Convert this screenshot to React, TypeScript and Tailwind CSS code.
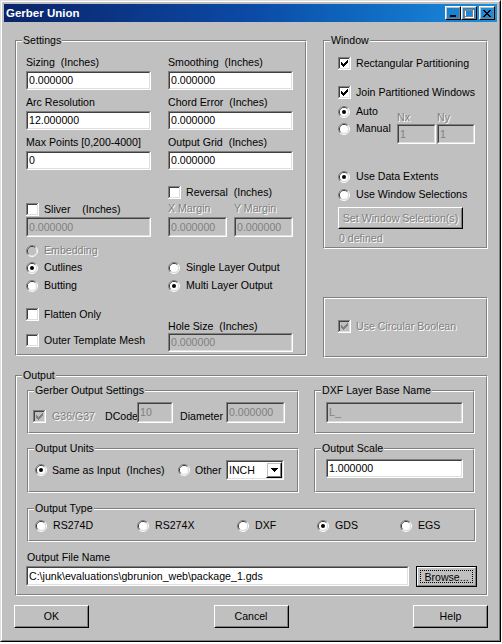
import React from "react";

const dis = "text-[#808080] [text-shadow:1px_1px_0_#fff]";
const sunkenOuter = "border border-t-[#808080] border-l-[#808080] border-b-white border-r-white";
const sunkenInner = "border border-t-[#404040] border-l-[#404040] border-b-[#dfdfdf] border-r-[#dfdfdf]";
const raisedOuter = "border border-t-white border-l-white border-b-black border-r-black";
const raisedInner = "border border-t-[#c0c0c0] border-l-[#c0c0c0] border-b-[#808080] border-r-[#808080]";

function Etched({ className = "", label, children }: { className?: string; label?: string; children?: React.ReactNode }) {
  return (
    <div className={`relative shrink-0 border border-t-[#808080] border-l-[#808080] border-b-white border-r-white ${className}`}>
      <div className="h-full border border-t-white border-l-white border-b-[#808080] border-r-[#808080]">{children}</div>
      {label && (
        <span className="absolute left-[6px] top-[-7px] bg-[#c0c0c0] px-[1px] leading-[13px] whitespace-pre">{label}</span>
      )}
    </div>
  );
}

function Field({ className = "", value, disabled }: { className?: string; value: string; disabled?: boolean }) {
  return (
    <div className={`shrink-0 ${sunkenOuter} ${className}`}>
      <div className={`h-full w-full flex items-center overflow-hidden pl-[1px] ${sunkenInner} ${disabled ? "bg-[#c0c0c0] text-[#808080]" : "bg-white text-black"}`}>
        <span className="leading-[13px] whitespace-pre">{value}</span>
      </div>
    </div>
  );
}

function Button({ className = "", children, disabled }: { className?: string; children: React.ReactNode; disabled?: boolean }) {
  return (
    <div className={`shrink-0 ${raisedOuter} ${className}`}>
      <div className={`h-full w-full flex items-center justify-center ${raisedInner}`}>
        <span className={`leading-[13px] whitespace-pre ${disabled ? dis : ""}`}>{children}</span>
      </div>
    </div>
  );
}

function CheckBox({ checked, disabled }: { checked?: boolean; disabled?: boolean }) {
  const bg = disabled ? "#c0c0c0" : "#ffffff";
  const m = disabled ? "#808080" : "#000000";
  return (
    <svg width="13" height="13" viewBox="0 0 13 13" shapeRendering="crispEdges" className="shrink-0">
      <rect x="0" y="0" width="13" height="13" fill="#ffffff" />
      <rect x="0" y="0" width="12" height="12" fill="#808080" />
      <rect x="1" y="1" width="11" height="11" fill="#dfdfdf" />
      <rect x="1" y="1" width="10" height="10" fill="#404040" />
      <rect x="2" y="2" width="9" height="9" fill={bg} />
      {checked && (
        <g fill={m}>
          <rect x="9" y="3" width="1" height="1" />
          <rect x="8" y="4" width="2" height="1" />
          <rect x="3" y="5" width="1" height="1" />
          <rect x="7" y="5" width="3" height="1" />
          <rect x="3" y="6" width="2" height="1" />
          <rect x="6" y="6" width="3" height="1" />
          <rect x="3" y="7" width="5" height="1" />
          <rect x="4" y="8" width="3" height="1" />
          <rect x="5" y="9" width="1" height="1" />
        </g>
      )}
    </svg>
  );
}

function RadioDot({ checked, disabled }: { checked?: boolean; disabled?: boolean }) {
  const bg = disabled ? "#c0c0c0" : "#ffffff";
  const m = disabled ? "#808080" : "#000000";
  return (
    <svg width="12" height="12" viewBox="0 0 12 12" className="shrink-0">
      <path d="M2.11 9.89 A5.5 5.5 0 0 1 9.89 2.11" stroke="#808080" strokeWidth="1" fill="none" />
      <path d="M9.89 2.11 A5.5 5.5 0 0 1 2.11 9.89" stroke="#ffffff" strokeWidth="1" fill="none" />
      <path d="M2.82 9.18 A4.5 4.5 0 0 1 9.18 2.82" stroke="#404040" strokeWidth="1" fill="none" />
      <path d="M9.18 2.82 A4.5 4.5 0 0 1 2.82 9.18" stroke="#dfdfdf" strokeWidth="1" fill="none" />
      <circle cx="6" cy="6" r="4" fill={bg} />
      {checked && <circle cx="6" cy="6" r="2" fill={m} />}
    </svg>
  );
}

function Check({ label, checked, disabled, className = "" }: { label: string; checked?: boolean; disabled?: boolean; className?: string }) {
  return (
    <div className={`flex items-center h-[13px] shrink-0 ${className}`}>
      <CheckBox checked={checked} disabled={disabled} />
      <span className={`ml-[5px] leading-[13px] whitespace-pre ${disabled ? dis : ""}`}>{label}</span>
    </div>
  );
}

function Radio({ label, checked, disabled, className = "" }: { label: string; checked?: boolean; disabled?: boolean; className?: string }) {
  return (
    <div className={`flex items-center h-[13px] shrink-0 ${className}`}>
      <RadioDot checked={checked} disabled={disabled} />
      <span className={`ml-[6px] leading-[13px] whitespace-pre ${disabled ? dis : ""}`}>{label}</span>
    </div>
  );
}

function Label({ children, disabled, className = "" }: { children: React.ReactNode; disabled?: boolean; className?: string }) {
  return <div className={`h-[13px] leading-[13px] whitespace-pre shrink-0 ${disabled ? dis : ""} ${className}`}>{children}</div>;
}

function TitleButton({ children, className = "" }: { children: React.ReactNode; className?: string }) {
  return (
    <div className={`w-[16px] h-[14px] ${raisedOuter} ${className}`}>
      <div className={`h-full w-full flex items-center justify-center ${raisedInner}`}>{children}</div>
    </div>
  );
}

export default function App() {
  return (
    <div className="w-[502px] h-[644px] bg-white overflow-hidden font-['Liberation_Sans',Arial,sans-serif] text-[10.6px] text-black">
      <div className="w-[501px] h-[642px] bg-[#c0c0c0] border border-t-[#dfdfdf] border-l-[#dfdfdf] border-b-black border-r-black">
        <div className="h-full border border-t-white border-l-white border-b-[#808080] border-r-[#808080] p-[2px] flex flex-col">
          {/* Title bar */}
          <div className="h-[18px] shrink-0 flex items-center bg-linear-to-r from-[#0a246a] via-[#0b4aa6] to-[#1c8ede] pr-[2px]">
            <span className="ml-[2px] font-bold text-white text-[11.5px] leading-[14px]">Gerber Union</span>
            <div className="ml-auto flex items-center">
              <TitleButton>
                <svg width="8" height="7" viewBox="0 0 8 7" shapeRendering="crispEdges">
                  <rect x="1" y="5" width="6" height="2" fill="#000" />
                </svg>
              </TitleButton>
              <TitleButton>
                <svg width="10" height="9" viewBox="0 0 10 9" shapeRendering="crispEdges">
                  <rect x="1.5" y="1.5" width="8" height="7" fill="none" stroke="#fff" />
                  <rect x="0.5" y="0.5" width="8" height="7" fill="none" stroke="#808080" />
                  <rect x="1" y="1" width="7" height="1" fill="#808080" />
                </svg>
              </TitleButton>
              <TitleButton className="ml-[2px]">
                <svg width="8" height="7" viewBox="0 0 8 7" shapeRendering="crispEdges">
                  <g fill="#000">
                    <rect x="0" y="0" width="2" height="1" />
                    <rect x="6" y="0" width="2" height="1" />
                    <rect x="1" y="1" width="2" height="1" />
                    <rect x="5" y="1" width="2" height="1" />
                    <rect x="2" y="2" width="4" height="1" />
                    <rect x="3" y="3" width="2" height="1" />
                    <rect x="2" y="4" width="4" height="1" />
                    <rect x="1" y="5" width="2" height="1" />
                    <rect x="5" y="5" width="2" height="1" />
                    <rect x="0" y="6" width="2" height="1" />
                    <rect x="6" y="6" width="2" height="1" />
                  </g>
                </svg>
              </TitleButton>
            </div>
          </div>

          {/* Client */}
          <div className="flex flex-col">
            <div className="flex mt-[18px] ml-[11px] gap-[16px] h-[318px]">
              {/* Settings */}
              <Etched label="Settings" className="w-[292px] h-[316px]">
                <div className="flex pl-[9px] pt-[14px]">
                  <div className="flex flex-col w-[142px]">
                    <Label>Sizing  (Inches)</Label>
                    <Field className="mt-[2px] w-[125px] h-[19px]" value="0.000000" />
                    <Label className="mt-[6px]">Arc Resolution</Label>
                    <Field className="mt-[2px] w-[125px] h-[19px]" value="12.000000" />
                    <Label className="mt-[6px]">Max Points [0,200-4000]</Label>
                    <Field className="mt-[2px] w-[125px] h-[19px]" value="0" />
                    <Check className="mt-[33px]" label="Sliver    (Inches)" />
                    <Field className="mt-[1px] w-[125px] h-[20px]" value="0.000000" disabled />
                    <Radio className="mt-[7px]" label="Embedding" disabled />
                    <Radio className="mt-[4px]" label="Cutlines" checked />
                    <Radio className="mt-[5px]" label="Butting" />
                    <Check className="mt-[16px]" label="Flatten Only" />
                    <Check className="mt-[13px]" label="Outer Template Mesh" />
                  </div>
                  <div className="flex flex-col w-[125px]">
                    <Label>Smoothing  (Inches)</Label>
                    <Field className="mt-[2px] w-[125px] h-[19px]" value="0.000000" />
                    <Label className="mt-[6px]">Chord Error  (Inches)</Label>
                    <Field className="mt-[2px] w-[125px] h-[19px]" value="0.000000" />
                    <Label className="mt-[6px]">Output Grid  (Inches)</Label>
                    <Field className="mt-[2px] w-[125px] h-[19px]" value="0.000000" />
                    <Check className="mt-[16px]" label="Reversal  (Inches)" />
                    <div className="flex gap-[7px] mt-[3px]">
                      <div className="flex flex-col w-[59px]">
                        <Label disabled>X Margin</Label>
                        <Field className="mt-[2px] w-[59px] h-[20px]" value="0.000000" disabled />
                      </div>
                      <div className="flex flex-col w-[59px]">
                        <Label disabled>Y Margin</Label>
                        <Field className="mt-[2px] w-[59px] h-[20px]" value="0.000000" disabled />
                      </div>
                    </div>
                    <Radio className="mt-[24px]" label="Single Layer Output" />
                    <Radio className="mt-[5px]" label="Multi Layer Output" checked />
                    <Label className="mt-[28px] h-[12px]">Hole Size  (Inches)</Label>
                    <Field className="w-[125px] h-[19px]" value="0.000000" disabled />
                  </div>
                </div>
              </Etched>

              {/* Right column */}
              <div className="flex flex-col w-[165px]">
                <Etched label="Window" className="w-[165px] h-[209px]">
                  <div className="flex flex-col pl-[13px] pt-[15px]">
                    <Check label="Rectangular Partitioning" checked />
                    <Check className="mt-[16px]" label="Join Partitioned Windows" checked />
                    <div className="flex mt-[6px]">
                      <div className="flex flex-col w-[59px]">
                        <Radio label="Auto" checked />
                        <Radio className="mt-[4px]" label="Manual" />
                      </div>
                      <div className="flex gap-[1px]">
                        <div className="flex flex-col w-[39px]">
                          <Label disabled className="mt-[6px] h-[12px]">Nx</Label>
                          <Field className="w-[39px] h-[20px]" value="1" disabled />
                        </div>
                        <div className="flex flex-col w-[38px]">
                          <Label disabled className="mt-[6px] h-[12px]">Ny</Label>
                          <Field className="w-[38px] h-[20px]" value="1" disabled />
                        </div>
                      </div>
                    </div>
                    <Radio className="mt-[26px]" label="Use Data Extents" checked />
                    <Radio className="mt-[5px]" label="Use Window Selections" />
                    <Button className="mt-[6px] w-[125px] h-[22px]" disabled>Set Window Selection(s)</Button>
                    <Label disabled className="mt-[3px] ml-[1px]">0 defined</Label>
                  </div>
                </Etched>
                <Etched className="mt-[48px] w-[165px] h-[61px]">
                  <div className="flex flex-col pl-[13px] pt-[21px]">
                    <Check label="Use Circular Boolean" checked disabled />
                  </div>
                </Etched>
              </div>
            </div>

            {/* Output */}
            <Etched label="Output" className="ml-[11px] mt-[17px] w-[473px] h-[221px]">
              <div className="flex flex-col pl-[10px] pt-[13px]">
                <div className="flex gap-[15px]">
                  <Etched label="Gerber Output Settings" className="w-[272px] h-[44px]">
                    <div className="flex items-end mt-[10px] h-[21px]">
                      <div className="ml-[4px] h-[13px] flex items-center">
                        <CheckBox checked disabled />
                      </div>
                      <span className={`ml-[6px] w-[53px] h-[13px] leading-[13px] ${dis}`}>G36/G37</span>
                      <span className="w-[32px] h-[13px] leading-[13px]">DCode</span>
                      <Field className="w-[36px] h-[21px]" value="10" disabled />
                      <span className="ml-[7px] w-[46px] h-[13px] leading-[13px]">Diameter</span>
                      <Field className="w-[59px] h-[21px]" value="0.000000" disabled />
                    </div>
                  </Etched>
                  <Etched label="DXF Layer Base Name" className="w-[161px] h-[44px]">
                    <Field className="ml-[10px] mt-[10px] w-[137px] h-[21px]" value="L_" disabled />
                  </Etched>
                </div>
                <div className="flex gap-[15px] mt-[14px]">
                  <Etched label="Output Units" className="w-[272px] h-[45px]">
                    <div className="flex items-center mt-[10px] h-[20px] pl-[6px]">
                      <RadioDot checked />
                      <span className="ml-[5px] w-[126px] leading-[13px] whitespace-pre">Same as Input  (Inches)</span>
                      <RadioDot />
                      <span className="ml-[5px] w-[31px] leading-[13px]">Other</span>
                      <div className={`w-[58px] h-[20px] ${sunkenOuter}`}>
                        <div className={`h-full w-full flex items-center bg-white ${sunkenInner}`}>
                          <span className="flex-1 pl-[1px] leading-[13px]">INCH</span>
                          <div className={`w-[16px] h-[16px] ${raisedOuter}`}>
                            <div className={`h-full w-full flex items-center justify-center ${raisedInner}`}>
                              <svg width="7" height="4" viewBox="0 0 7 4" shapeRendering="crispEdges">
                                <g fill="#000">
                                  <rect x="0" y="0" width="7" height="1" />
                                  <rect x="1" y="1" width="5" height="1" />
                                  <rect x="2" y="2" width="3" height="1" />
                                  <rect x="3" y="3" width="1" height="1" />
                                </g>
                              </svg>
                            </div>
                          </div>
                        </div>
                      </div>
                    </div>
                  </Etched>
                  <Etched label="Output Scale" className="w-[161px] h-[45px]">
                    <Field className="ml-[10px] mt-[9px] w-[137px] h-[19px]" value="1.000000" />
                  </Etched>
                </div>
                <Etched label="Output Type" className="mt-[15px] w-[449px] h-[34px]">
                  <div className="flex mt-[9px] pl-[6px]">
                    <Radio className="w-[102px]" label="RS274D" />
                    <Radio className="w-[100px]" label="RS274X" />
                    <Radio className="w-[80px]" label="DXF" />
                    <Radio className="w-[83px]" label="GDS" checked />
                    <Radio label="EGS" />
                  </div>
                </Etched>
                <Label className="mt-[9px]">Output File Name</Label>
                <div className="flex gap-[7px] mt-[2px] -ml-[1px]">
                  <Field className="w-[383px] h-[20px]" value={"C:\\junk\\evaluations\\gbrunion_web\\package_1.gds"} />
                  <div className="w-[61px] h-[21px] border border-black">
                    <div className="h-full w-full border border-t-white border-l-white border-b-[#808080] border-r-[#808080] p-[2px]">
                      <div className="h-full w-full border border-dotted border-black flex items-center justify-center">
                        <span className="leading-[12px]">Browse...</span>
                      </div>
                    </div>
                  </div>
                </div>
              </div>
            </Etched>

            {/* Bottom buttons */}
            <div className="flex justify-between ml-[10px] mt-[9px] w-[474px]">
              <Button className="w-[75px] h-[23px]">OK</Button>
              <Button className="w-[75px] h-[23px]">Cancel</Button>
              <Button className="w-[75px] h-[23px]">Help</Button>
            </div>
          </div>
        </div>
      </div>
    </div>
  );
}
